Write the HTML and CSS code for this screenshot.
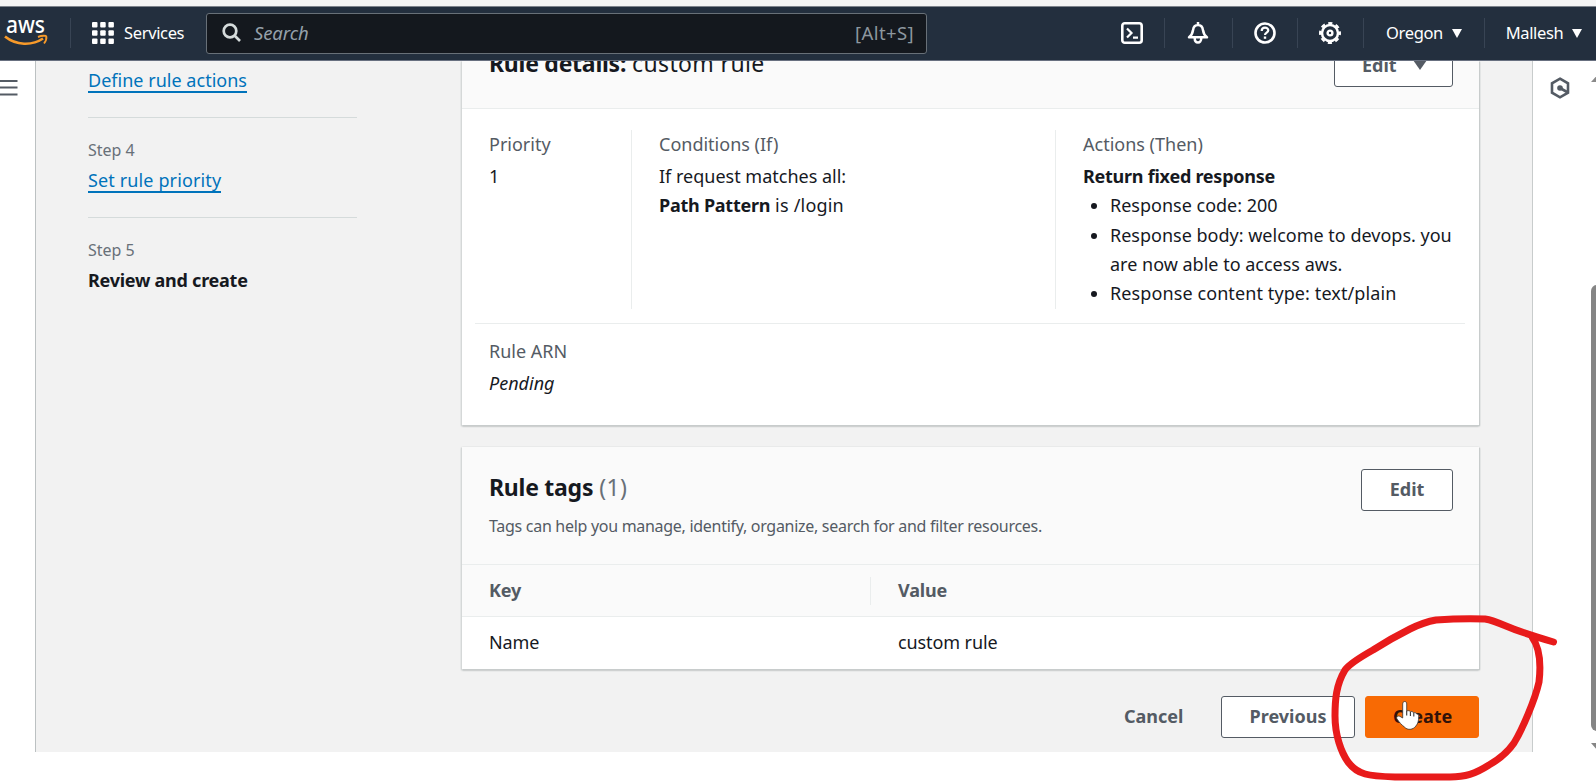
FILE: index.html
```html
<!DOCTYPE html>
<html lang="en">
<head>
<meta charset="utf-8">
<title>Create rule</title>
<link rel="stylesheet" href="styles.css">
</head>
<body>
<div class="browser-edge"></div>
<header class="topnav">
  <div class="logo-cell">
    <svg class="logo" width="44" height="40" viewBox="0 -6 44 40">
      <text class="logo-text" x="1" y="13.500" textLength="39" lengthAdjust="spacingAndGlyphs">aws</text>
      <path d="M0 17.500C11 26.500 27 27 38 19.500" fill="none" stroke="#f79a2a" stroke-width="2.600"/>
      <path d="M33 18C37 16.500 41 16.500 41.300 17.500C41.700 19.500 41 22 39 24.500" fill="none" stroke="#f79a2a" stroke-width="1.900"/>
    </svg>
  </div>
  <div class="services">
    <svg width="22" height="22" viewBox="0 0 22 22" fill="#fff">
      <rect width="5.500" height="5.500" rx="1"/><rect x="8.200" width="5.500" height="5.500" rx="1"/><rect x="16.400" width="5.500" height="5.500" rx="1"/>
      <rect y="8.200" width="5.500" height="5.500" rx="1"/><rect x="8.200" y="8.200" width="5.500" height="5.500" rx="1"/><rect x="16.400" y="8.200" width="5.500" height="5.500" rx="1"/>
      <rect y="16.400" width="5.500" height="5.500" rx="1"/><rect x="8.200" y="16.400" width="5.500" height="5.500" rx="1"/><rect x="16.400" y="16.400" width="5.500" height="5.500" rx="1"/>
    </svg>
    <span>Services</span>
  </div>
  <div class="search">
    <svg width="20" height="20" viewBox="0 0 20 20" fill="none" stroke="#d5dbdb" stroke-width="2.700"><circle cx="8" cy="8" r="6.300"/><path d="M12.500 12.500l5.500 5.500"/></svg>
    <span class="placeholder">Search</span>
    <span class="hint">[Alt+S]</span>
  </div>
  <nav class="tools">
    <div class="tool shell"><svg width="22" height="22" viewBox="0 0 22 22" fill="none" stroke="#fff" stroke-width="2.600"><rect x="1.300" y="1.300" width="19.400" height="19.400" rx="2.500"/><path d="M6 6.500l4.500 4.500L6 15.500M12 15.700h5" stroke-width="2.200"/></svg></div>
    <div class="tool bell"><svg width="22" height="22" viewBox="0 0 22 22" fill="none" stroke="#fff" stroke-width="2.500" stroke-linejoin="round"><path d="M11 0v3M2 15.300c2.700-1.800 3.500-4 4-7C6.500 4.500 8.500 3 11 3s4.500 1.500 5 5.300c.5 3 1.300 5.200 4 7z"/><path d="M7.700 16c0 6 6.600 6 6.600 0"/></svg></div>
    <div class="tool help"><svg width="22" height="22" viewBox="0 0 22 22" fill="none" stroke="#fff" stroke-width="2.600"><circle cx="11" cy="11" r="9.500"/><path d="M7.700 9c0-4.500 6.600-4.200 6.600-.7 0 2.300-3.300 2.200-3.300 4.700" stroke-width="2.200"/><path d="M11 14.500v2.300" stroke-width="2.400"/></svg></div>
    <div class="tool gear"><svg width="22" height="22" viewBox="0 0 22 22" fill="none" stroke="#fff"><circle cx="11" cy="11" r="8" stroke-width="2.500"/><circle cx="11" cy="11" r="9.900" stroke-width="2.200" stroke-dasharray="4.200 3.575" stroke-dashoffset="2.100"/><circle cx="11" cy="11" r="2.400" stroke-width="2.400"/></svg></div>
    <div class="tool region"><span>Oregon</span><i class="caret"></i></div>
    <div class="tool user"><span>Mallesh</span><i class="caret"></i></div>
  </nav>
</header>
<div class="app">
  <aside class="left-rail">
    <svg width="18" height="18" viewBox="0 0 18 18" stroke="#545b64" stroke-width="2"><path d="M0 2h17.500M0 8.500h17.500M0 15.500h17.500"/></svg>
  </aside>
  <main class="page">
    <ol class="steps">
      <li><a class="define" href="#">Define rule actions</a></li>
      <li><small>Step 4</small><a class="priority" href="#">Set rule priority</a></li>
      <li><small>Step 5</small><b>Review and create</b></li>
    </ol>
    <div class="content">
      <section class="card details">
        <div class="card-head">
          <h2><b>Rule details:</b> <span class="rule-name">custom rule</span></h2>
          <button class="btn edit-menu"><span>Edit</span><i class="caret"></i></button>
        </div>
        <div class="columns">
          <div class="col"><div class="label">Priority</div><div>1</div></div>
          <div class="col"><div class="label">Conditions (If)</div><div>If request matches all:</div><div class="path"><b>Path Pattern</b> is /login</div></div>
          <div class="col"><div class="label">Actions (Then)</div><b>Return fixed response</b>
            <ul><li>Response code: 200</li><li>Response body: welcome to devops. you are now able to access aws.</li><li class="ctype">Response content type: text/plain</li></ul>
          </div>
        </div>
        <div class="arn"><div class="label">Rule ARN</div><em>Pending</em></div>
      </section>
      <section class="card tags">
        <div class="card-head">
          <div><h2><b>Rule tags</b> <span class="count">(1)</span></h2><p>Tags can help you manage, identify, organize, search for and filter resources.</p></div>
          <button class="btn edit">Edit</button>
        </div>
        <div class="row th"><div>Key</div><div>Value</div></div>
        <div class="row td"><div>Name</div><div>custom rule</div></div>
      </section>
      <div class="actions">
        <button class="btn cancel">Cancel</button>
        <button class="btn previous">Previous</button>
        <button class="btn create">Create</button>
      </div>
    </div>
  </main>
  <aside class="right-rail">
    <svg width="20" height="22" viewBox="0 0 20 22" fill="none" stroke="#545b64" stroke-width="2.600"><path d="M10 1.700l8 4.600v9.400l-8 4.600-8-4.600V6.300z"/><path d="M10 11l7 4"/><circle cx="10" cy="11" r="2.800" fill="#545b64" stroke="none"/></svg>
    <div class="scrollbar"><i class="up"></i><i class="thumb"></i><i class="down"></i></div>
  </aside>
</div>
<svg class="cursor" width="24" height="32" viewBox="0 0 24 32"><path d="M8.700 1.500c1.500 0 2 1.200 2 2.500v7c1.300-.7 3-.3 3.600.7 1.300-.5 2.700 0 3.300 1 1.400-.3 2.500 0 3 1.200 1.500 0 2.100.9 2.100 2.200 0 5-.7 7.500-2.900 10-2.700 3.800-8.300 4.400-11.300 1-3-2.300-5-4.600-7.500-8.100-1.200-2 .8-3.700 3-2.600L6.700 18V4c0-1.500.7-2.500 2-2.500z" fill="#fff" stroke="#333" stroke-width=".8"/><path d="M10.700 11v4.500M14.400 12v4M17.800 13v3.500" stroke="#333" stroke-width="1.100" fill="none"/></svg>
<svg class="marker" width="240" height="182" viewBox="1330 600 240 182"><path d="M1553.500 642C1540 638 1520 632 1506 626Q1492 620 1485 619C1470 618.500 1450 619 1436 620Q1424 622 1410 629Q1390 639 1373 650Q1350 663 1345 670C1336 685 1335 700 1335 716C1335 735 1341 752 1348 762C1358 775 1368 776 1395 777H1450C1465 777 1475 774 1489 765Q1505 756 1514 743C1522 730 1535 700 1539 682C1541 665 1540 648 1532 637" fill="none" stroke="#e81b1b" stroke-width="7" stroke-linecap="round" stroke-linejoin="round"/></svg>
</body>
</html>
```
FILE: styles.css
```css
* { box-sizing: border-box; }
body { margin: 0; width: 1596px; height: 782px; overflow: hidden; position: relative; background: #fff; font: 18px/29.33px "Noto Sans", sans-serif; color: #16191f; letter-spacing: 0; }
b { letter-spacing: -0.25px; }
.browser-edge { height: 6px; background: #f4f4f4; }
.topnav { height: 55px; display: flex; align-items: center; background: #232f3e; border-top: 1px solid #7d838b; border-bottom: 1px solid #687080; color: #fff; font-size: 16.500px; letter-spacing: -0.35px; padding-bottom: 1px; }
.topnav > * { flex: none; }
.logo-cell { width: 71px; height: 30px; padding-left: 5px; border-right: 1px solid #384454; display: flex; align-items: center; }
.logo-text { font-family: "Noto Sans", sans-serif; font-size: 23px; font-weight: 500; fill: #fff; letter-spacing: 0; }
.logo { display: block; overflow: visible; }
.services { width: 135px; display: flex; align-items: center; gap: 10px; padding-left: 21px; }
.search { width: 721px; height: 41px; border: 1px solid #687078; border-radius: 3px; background: #14181e; display: flex; align-items: center; padding: 0 12px 0 15px; }
.placeholder { margin-left: 12px; font-style: italic; font-size: 18.500px; letter-spacing: -0.1px; color: #95a0aa; }
.hint { margin-left: auto; font-size: 18.500px; letter-spacing: 0.4px; color: #8d979f; }
.tools { display: flex; margin-left: 172px; }
.tool { height: 30px; display: flex; align-items: center; justify-content: center; border-left: 1px solid #384454; flex: none; }
.tool:first-child { border: 0; }
.tool svg { display: block; }
.shell { width: 65px; }
.bell { width: 68px; padding-right: 1px; }
.help { width: 65px; }
.gear { width: 66px; padding-right: 1px; }
.region { width: 121px; gap: 9px; }
.user { width: 121px; gap: 9px; padding-right: 2px; }
.caret { width: 0; height: 0; border: 5.500px solid transparent; border-top: 9px solid currentColor; border-bottom: 0; }
.app { height: 691px; display: flex; overflow: hidden; }
.left-rail { width: 36px; border-right: 1px solid #bcc1c2; padding-top: 18px; }
.left-rail svg { display: block; }
.page { width: 1496px; background: #f2f2f2; display: flex; height: 691px; }
.steps { list-style: none; margin: 0; padding: 4px 0 0 52px; width: 426px; }
.steps li { width: 269px; height: 100px; padding-top: 17px; }
.steps li:first-child { height: 53px; padding-top: 0; }
.steps li:not(:last-child) { border-bottom: 1px solid #d5dbdb; }
.steps small { display: block; font-size: 16px; line-height: 31px; height: 30px; color: #687078; }
.steps a, .steps b { display: inline-block; line-height: 30px; }
.steps a { color: #0073bb; text-decoration: none; border-bottom: 2px solid #0073bb; height: 28px; }
.define { letter-spacing: 0.02px; }
.priority { letter-spacing: 0.13px; }
.content { width: 1017px; }
.card { background: #fff; box-shadow: 1px 1px 1px #c8cccc, -1px 1px 1px #d5d8d8, 0 1px 2px #858a8a; }
.card-head { background: #fafafa; border-bottom: 1px solid #eaeded; display: flex; justify-content: space-between; padding: 0 26px 0 27px; }
h2 { margin: 0; font-size: 23px; font-weight: 400; line-height: 32px; }
.rule-name { letter-spacing: 0.35px; }
.details { height: 364px; }
.details .card-head { height: 48px; }
.details h2 { margin-top: -14px; }
.btn { height: 42px; border: 1px solid #545b64; border-radius: 3px; background: #fff; color: #545b64; font: 700 18px/26px "Noto Sans", sans-serif; letter-spacing: 0; padding: 0 27px 2px; white-space: nowrap; }
.edit-menu { width: 119px; margin-top: -16px; display: flex; align-items: center; justify-content: space-between; padding: 0 25px 3px 27px; }
.edit-menu .caret { border-width: 10px 7px 0; }
.edit { width: 92px; }
.columns { display: grid; grid-template-columns: 157px 424px 1fr; margin: 0 14px 0 13px; padding-top: 21px; height: 215px; padding-bottom: 15px; border-bottom: 1px solid #eaeded; line-height: 29.33px; }
.col { padding: 0 0 0 14px; border-right: 1px solid #eaeded; }
.col + .col { padding-left: 27px; }
.col:last-child { border: 0; }
.label { color: #545b64; line-height: 29px; margin-bottom: 3px; }
.path { letter-spacing: 0.2px; }
.col ul { margin: 0; padding-left: 27px; }
.ctype { letter-spacing: 0.1px; }
.arn { padding: 13px 27px; }
.tags { margin-top: 22px; height: 222px; }
.tags .card-head { height: 118px; padding-top: 22px; }
.tags h2 { margin-top: 2px; }
.count { color: #687078; letter-spacing: 0.4px; }
p { margin: 11px 0 0; font-size: 16px; line-height: 24px; color: #545b64; letter-spacing: -0.29px; }
.row { display: grid; grid-template-columns: 409px 1fr; height: 52px; line-height: 50px; }
.row > div { padding-left: 27px; }
.td { letter-spacing: -0.1px; }
.th { background: #fafafa; border-bottom: 1px solid #eaeded; color: #545b64; font-weight: 700; letter-spacing: -0.2px; align-items: center; line-height: 27px; }
.th > div { padding-bottom: 1px; }
.th > div:first-child { border-right: 1px solid #eaeded; }
.actions { display: flex; justify-content: flex-end; padding-top: 27px; }
.actions .btn { padding-bottom: 3px; }
.cancel { border-color: transparent; background: none; width: 113px; }
.previous { width: 134px; margin-left: 12px; }
.create { width: 114px; margin-left: 10px; background: #f86a04; border-color: #f86a04; color: #31120a; }
.right-rail { width: 64px; border-left: 1px solid #c8cccc; display: flex; justify-content: space-between; background: #fff; padding: 16px 0 0 17px; }
.scrollbar { width: 5px; overflow: hidden; margin-top: -4px; display: flex; flex-direction: column; }
.scrollbar .up { border: 8px solid transparent; border-top: 0; border-bottom: 9px solid #8a8a8a; width: 0; }
.scrollbar .thumb { height: 448px; width: 12px; margin-top: 203px; border-radius: 6px; background: #858585; }
.scrollbar .down { margin-top: 12px; border: 8px solid transparent; border-bottom: 0; border-top: 9px solid #858585; width: 0; }
.cursor { position: absolute; left: 1396px; top: 700px; }
.marker { position: absolute; left: 1330px; top: 600px; }
```
